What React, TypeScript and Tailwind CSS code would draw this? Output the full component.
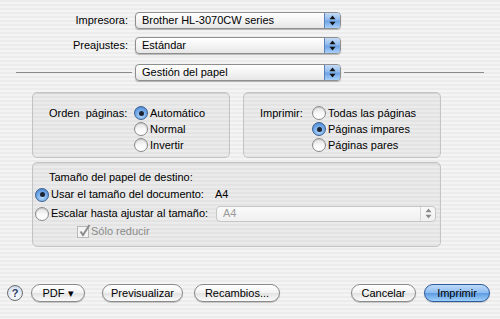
import React from "react";

const font = { fontFamily: '"Liberation Sans", Arial, sans-serif' };

function Arrows({ color = "#111" }: { color?: string }) {
  return (
    <svg width="7" height="11" viewBox="0 0 7 11">
      <path d="M3.5 0.5 L6.5 4.2 L0.5 4.2 Z" fill={color} />
      <path d="M3.5 10.5 L6.5 6.8 L0.5 6.8 Z" fill={color} />
    </svg>
  );
}

function Popup({ text }: { text: string }) {
  return (
    <div className="relative flex h-[17px] w-[206px] items-stretch rounded-[4px] border border-[#8e8e8e] bg-[linear-gradient(180deg,#ffffff_0%,#f4f4f4_50%,#e6e6e6_100%)] shadow-[0_1px_1px_rgba(0,0,0,0.25)]">
      <div className="flex flex-1 items-center whitespace-nowrap pl-[6px] text-[11px] leading-none text-black">{text}</div>
      <div className="flex w-[16px] items-center justify-center rounded-r-[3px] border-l border-[#5a82b8] bg-[linear-gradient(180deg,#c4dcf7_0%,#8db8ec_48%,#6aa0e4_52%,#a9d0fa_100%)]">
        <Arrows />
      </div>
    </div>
  );
}

function Radio({ on, label }: { on?: boolean; label: string }) {
  return (
    <div className="flex h-[16px] items-center gap-[2px] whitespace-nowrap">
      {on ? (
        <div className="flex h-[14px] w-[14px] shrink-0 items-center justify-center rounded-full border border-[#3c5f91] bg-[radial-gradient(circle_at_50%_70%,#b5dafb_0%,#6ea6e6_55%,#3e78c8_100%)]">
          <div className="h-[5px] w-[5px] rounded-full bg-[#1c2434]" />
        </div>
      ) : (
        <div className="h-[14px] w-[14px] shrink-0 rounded-full border border-[#8a8a8a] bg-[linear-gradient(180deg,#e3e3e3_0%,#fbfbfb_60%,#ffffff_100%)] shadow-[inset_0_1px_1px_rgba(0,0,0,0.15)]" />
      )}
      <span className="text-[11px] leading-none text-black">{label}</span>
    </div>
  );
}

function Button({ children, primary, w }: { children: React.ReactNode; primary?: boolean; w: string }) {
  return (
    <div
      className={
        "flex h-[18px] items-center justify-center whitespace-nowrap rounded-full border text-[11px] leading-none text-black shadow-[0_1px_1px_rgba(0,0,0,0.2)] " +
        w +
        " " +
        (primary
          ? "border-[#2d5a9a] bg-[linear-gradient(180deg,#bddaf8_0%,#8dbdf0_48%,#5d9be2_52%,#9fd0fb_100%)]"
          : "border-[#8a8a8a] bg-[linear-gradient(180deg,#ffffff_0%,#f2f2f2_50%,#e3e3e3_52%,#fafafa_100%)]")
      }
    >
      {children}
    </div>
  );
}

export default function App() {
  return (
    <div
      style={font}
      className="flex h-[319px] w-[500px] flex-col overflow-hidden bg-[repeating-linear-gradient(180deg,#ececec_0px,#ececec_2px,#f4f4f4_2px,#f4f4f4_4px)] text-black"
    >
      <div className="flex flex-col gap-[8px] pt-[12px]">
        <div className="flex items-center">
          <div className="w-[128px] whitespace-nowrap text-right text-[11px]">Impresora:</div>
          <div className="ml-[7px]"><Popup text="Brother HL-3070CW series" /></div>
        </div>
        <div className="flex items-center">
          <div className="w-[128px] whitespace-nowrap text-right text-[11px]">Preajustes:</div>
          <div className="ml-[7px]"><Popup text="Estándar" /></div>
        </div>
        <div className="mt-[2px] flex items-center">
          <div className="ml-[16px] h-px w-[116px] bg-[#8c8c8c]" />
          <div className="ml-[3px]"><Popup text="Gestión del papel" /></div>
          <div className="ml-[3px] h-px w-[140px] bg-[#8c8c8c]" />
        </div>
      </div>

      <div className="ml-[32px] mt-[11px] flex gap-[13px]">
        <div className="flex h-[66px] w-[198px] rounded-[5px] border border-[#c4c4c4] bg-[rgba(0,0,0,0.035)] pl-[16px] pt-[12px] shadow-[inset_0_1px_1px_rgba(0,0,0,0.08)]">
          <div className="flex h-[16px] w-[85px] items-center whitespace-nowrap text-[11px] leading-none">Orden&nbsp; páginas:</div>
          <div className="flex flex-col">
            <Radio on label="Automático" />
            <Radio label="Normal" />
            <Radio label="Invertir" />
          </div>
        </div>
        <div className="flex h-[66px] w-[198px] rounded-[5px] border border-[#c4c4c4] bg-[rgba(0,0,0,0.035)] pl-[16px] pt-[12px] shadow-[inset_0_1px_1px_rgba(0,0,0,0.08)]">
          <div className="flex h-[16px] w-[52px] items-center whitespace-nowrap text-[11px] leading-none">Imprimir:</div>
          <div className="flex flex-col">
            <Radio label="Todas las páginas" />
            <Radio on label="Páginas impares" />
            <Radio label="Páginas pares" />
          </div>
        </div>
      </div>

      <div className="ml-[32px] mt-[4px] flex h-[85px] w-[409px] flex-col rounded-[5px] border border-[#c4c4c4] bg-[rgba(0,0,0,0.035)] pl-[2px] pt-[7px] shadow-[inset_0_1px_1px_rgba(0,0,0,0.08)]">
        <div className="ml-[14px] flex h-[14px] items-center whitespace-nowrap text-[11px] leading-none">Tamaño del papel de destino:</div>
        <div className="mt-[2px] flex h-[17px] items-center">
          <div className="w-[180px] shrink-0"><Radio on label="Usar el tamaño del documento:" /></div>
          <span className="text-[11px] leading-none">A4</span>
        </div>
        <div className="mt-[2px] flex h-[17px] items-center">
          <div className="w-[181px] shrink-0"><Radio label="Escalar hasta ajustar al tamaño:" /></div>
          <div className="flex h-[16px] w-[220px] items-stretch rounded-[4px] border border-[#c6c6c6] bg-[linear-gradient(180deg,#fafafa_0%,#f0f0f0_100%)]">
            <div className="flex flex-1 items-center pl-[6px] text-[11px] leading-none text-[#9a9a9a]">A4</div>
            <div className="flex w-[15px] items-center justify-center border-l border-[#d4d4d4]">
              <Arrows color="#8a8a8a" />
            </div>
          </div>
        </div>
        <div className="ml-[42px] mt-[1px] flex h-[17px] items-center gap-[2px]">
          <div className="relative h-[12px] w-[12px] border border-[#b8b8b8] bg-[#f4f4f4]">
            <svg className="absolute left-[1px] top-[-3px]" width="12" height="13" viewBox="0 0 12 13">
              <path d="M1.5 7.5 L4 11 L10.5 1" stroke="#8c8c8c" strokeWidth="2" fill="none" />
            </svg>
          </div>
          <span className="whitespace-nowrap text-[11px] leading-none text-[#8a8a8a]">Sólo reducir</span>
        </div>
      </div>

      <div className="mt-[37px] flex items-center pl-[7px]">
        <div className="flex h-[16px] w-[16px] items-center justify-center rounded-full border border-[#6e6e6e] bg-[radial-gradient(circle_at_50%_70%,#ffffff_0%,#dfe7f2_60%,#b8c4d6_100%)] text-[11px] font-bold leading-none text-[#2c3e66]">
          ?
        </div>
        <div className="ml-[8px]"><Button w="w-[54px]">PDF ▾</Button></div>
        <div className="ml-[17px]"><Button w="w-[81px]">Previsualizar</Button></div>
        <div className="ml-[11px]"><Button w="w-[86px]">Recambios...</Button></div>
        <div className="ml-[71px]"><Button w="w-[65px]">Cancelar</Button></div>
        <div className="ml-[8px]"><Button primary w="w-[66px]">Imprimir</Button></div>
      </div>
    </div>
  );
}
